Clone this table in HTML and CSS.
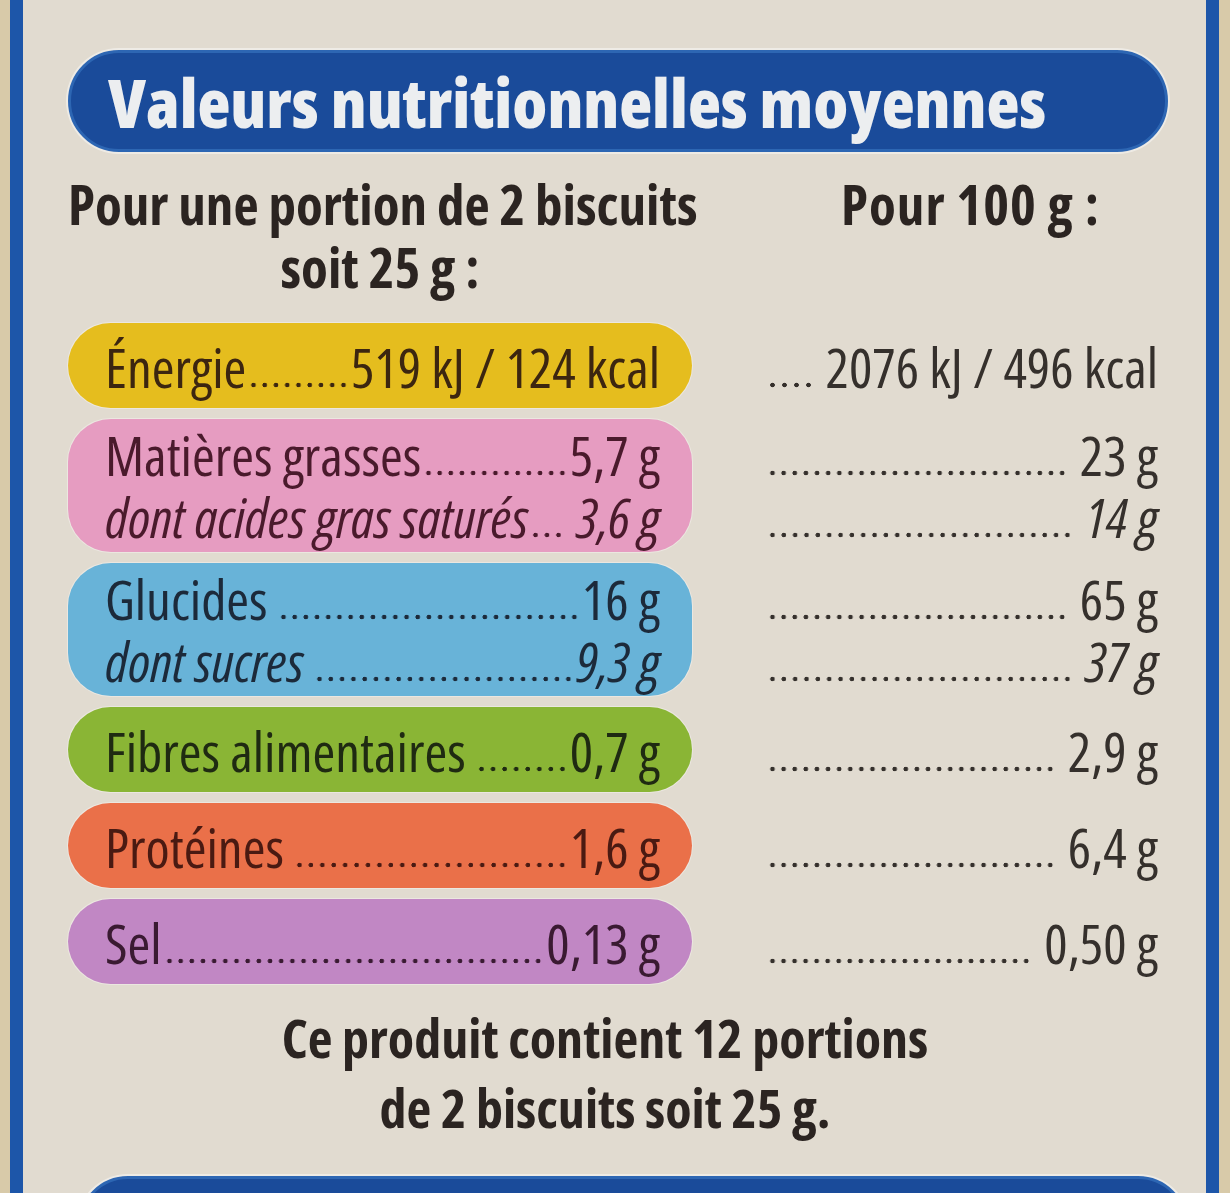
FILE: index.html
```html
<!DOCTYPE html>
<html lang="fr">

<head>
    <meta charset="UTF-8">
    <meta name="viewport" content="width=device-width, initial-scale=1.0">
    <title>Valeurs nutritionnelles moyennes</title>
    <link rel="stylesheet" href="styles.css">
</head>

<body>
    <div class="etiquette">
        <div class="titre">Valeurs nutritionnelles moyennes</div>

        <div class="tableau">
            <div class="entete">Pour une portion de 2 biscuits<br>soit 25 g :</div>
            <div class="entete entete-droite">Pour 100 g :</div>

            <div class="pastille jaune">
                <div class="ligne"><span>Énergie</span><span class="points"></span><span>519 kJ / 124 kcal</span></div>
            </div>
            <div class="cent">
                <div class="ligne"><span class="points"></span><span class="espace">2076 kJ / 496 kcal</span></div>
            </div>

            <div class="pastille rose double">
                <div class="ligne"><span>Matières grasses</span><span class="points"></span><span>5,7 g</span></div>
                <div class="ligne italique"><span>dont acides gras saturés</span><span class="points"></span><span class="espace">3,6 g</span></div>
            </div>
            <div class="cent double">
                <div class="ligne"><span class="points"></span><span class="espace">23 g</span></div>
                <div class="ligne italique"><span class="points"></span><span class="espace">14 g</span></div>
            </div>

            <div class="pastille bleu double">
                <div class="ligne"><span class="apres">Glucides</span><span class="points"></span><span>16 g</span></div>
                <div class="ligne italique"><span class="apres">dont sucres</span><span class="points"></span><span>9,3 g</span></div>
            </div>
            <div class="cent double">
                <div class="ligne"><span class="points"></span><span class="espace">65 g</span></div>
                <div class="ligne italique"><span class="points"></span><span class="espace">37 g</span></div>
            </div>

            <div class="pastille vert">
                <div class="ligne"><span class="apres">Fibres alimentaires</span><span class="points"></span><span>0,7 g</span></div>
            </div>
            <div class="cent">
                <div class="ligne"><span class="points"></span><span class="espace">2,9 g</span></div>
            </div>

            <div class="pastille orange">
                <div class="ligne"><span class="apres">Protéines</span><span class="points"></span><span>1,6 g</span></div>
            </div>
            <div class="cent">
                <div class="ligne"><span class="points"></span><span class="espace">6,4 g</span></div>
            </div>

            <div class="pastille violet">
                <div class="ligne"><span>Sel</span><span class="points"></span><span>0,13 g</span></div>
            </div>
            <div class="cent">
                <div class="ligne"><span class="points"></span><span class="espace">0,50 g</span></div>
            </div>
        </div>

        <p class="note">Ce produit contient 12 portions<br>de 2 biscuits soit 25 g.</p>

        <div class="bandeau"></div>
    </div>
</body>

</html>
```

FILE: styles.css
```css
html,
body {
    margin: 0;
    height: 1193px;
    overflow: hidden;
}

body {
    background: #d8caa9;
    font-family: "Open Sans", "Roboto Condensed", sans-serif;
    font-stretch: 75%;
    color: #2b2421;
}

.etiquette {
    margin-left: 10px;
    width: 1209px;
    height: 1193px;
    padding-top: 50px;
    box-sizing: border-box;
    background: #e1dbd0;
    border-left: 13px solid #1d56a9;
    border-right: 13px solid #1d56a9;
}

.titre {
    margin-left: 45px;
    width: 1100px;
    height: 102px;
    box-sizing: border-box;
    padding-left: 37px;
    background: #1a4b9a;
    border: 3px solid #2d66b3;
    border-radius: 51px;
    box-shadow: 0 0 0 2px rgba(255, 255, 255, 0.45);
    color: #eceef0;
    font-weight: 800;
    font-size: 68px;
    line-height: 98px;
    white-space: nowrap;
}

.tableau {
    margin: 20px 0 0 45px;
    display: grid;
    grid-template-columns: 624px 393px;
    column-gap: 73px;
    row-gap: 11px;
}

.entete {
    margin-bottom: 14px;
    font-weight: 700;
    font-size: 55px;
    line-height: 63px;
    text-align: center;
    white-space: nowrap;
}

.entete-droite {
    padding-left: 18px;
    letter-spacing: 1px;
}

.pastille {
    padding: 13px 32px 10px 37px;
    border-radius: 43px;
    box-shadow: 0 0 0 1px rgba(255, 255, 255, 0.35);
}

.pastille.double {
    padding: 5px 32px 4px 37px;
}

.cent {
    padding: 13px 0 10px;
    color: #35302c;
}

.cent.double {
    padding: 5px 0 4px;
}

.ligne {
    display: flex;
    height: 62px;
    font-size: 55px;
    font-weight: 500;
    line-height: 62px;
    white-space: nowrap;
}

.italique {
    font-style: italic;
}

/* points de conduite, dessinés en fond pour ne jamais couper un point */
.points {
    flex: 1;
    margin: 0 2px;
    background-image: radial-gradient(circle, currentColor 2px, transparent 2.6px);
    background-size: 11px 6px;
    background-repeat: space no-repeat;
    background-position: right bottom 10px;
}

.apres {
    margin-right: 8px;
}

.espace {
    margin-left: 10px;
}

.jaune {
    background: #e5bd1e;
    color: #3c2610;
}

.rose {
    background: #e69cc1;
    color: #4a1a2c;
}

.bleu {
    background: #68b3d8;
    color: #1c2a3a;
}

.vert {
    background: #8ab535;
    color: #1f2a12;
}

.orange {
    background: #ea7049;
    color: #4a1a12;
}

.violet {
    background: #c187c4;
    color: #3a1a32;
}

.note {
    margin: 18px 0 0 45px;
    width: 1074px;
    text-align: center;
    font-weight: 700;
    font-size: 54px;
    line-height: 70px;
}

.bandeau {
    margin: 34px 0 0 55px;
    width: 1110px;
    height: 100px;
    box-sizing: border-box;
    background: #1a4b9a;
    border: 3px solid #2d66b3;
    border-radius: 50px;
    box-shadow: 0 0 0 2px rgba(255, 255, 255, 0.45);
}
```
